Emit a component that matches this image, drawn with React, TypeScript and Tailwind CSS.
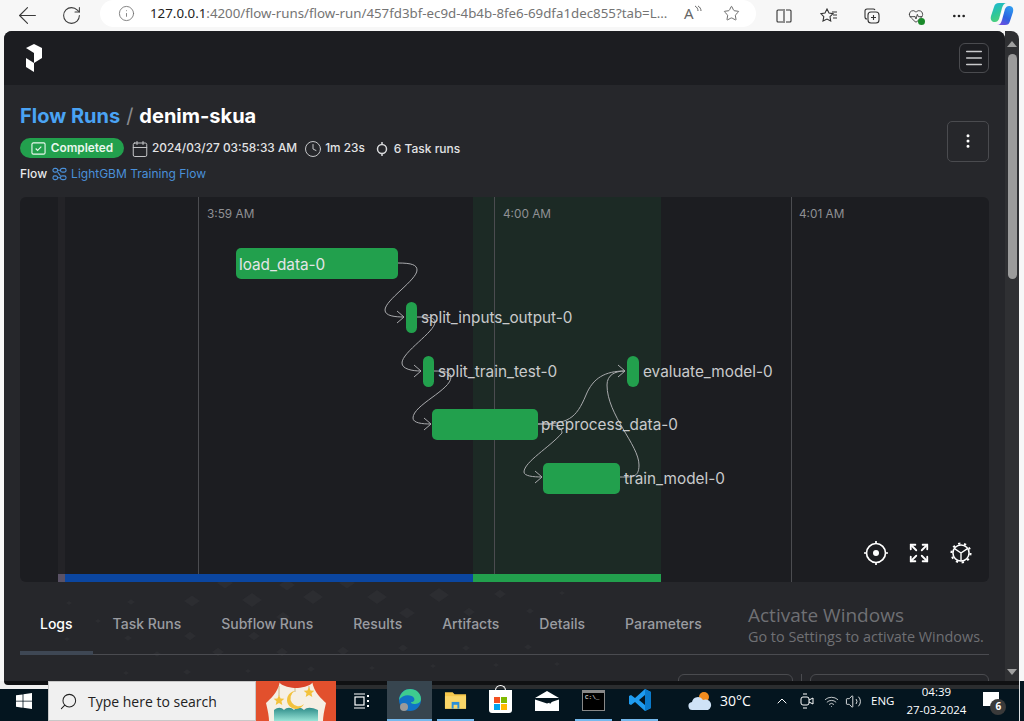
import {
  ArrowLeft,
  Calendar,
  ChevronUp,
  Clock,
  Ellipsis,
  EllipsisVertical,
  Expand,
  HeartPulse,
  Info,
  Menu,
  RotateCw,
  Search,
  Star,
  Volume2,
  Wifi,
} from "lucide-react";

const tabs = ["Logs", "Task Runs", "Subflow Runs", "Results", "Artifacts", "Details", "Parameters"];

const nodes = [
  { label: "load_data-0", box: "left-[216px] top-[51px] w-[162px] rounded-[5px]", text: "left-[219px] top-[56px] text-[#e4e5e7]" },
  { label: "split_inputs_output-0", box: "left-[386px] top-[105px] w-[11px] rounded-[6px]", text: "left-[401px] top-[109px] text-[#c9cacc]" },
  { label: "split_train_test-0", box: "left-[403px] top-[159px] w-[11px] rounded-[6px]", text: "left-[418px] top-[163px] text-[#c9cacc]" },
  { label: "evaluate_model-0", box: "left-[607px] top-[159px] w-[12px] rounded-[6px]", text: "left-[623px] top-[163px] text-[#c9cacc]" },
  { label: "preprocess_data-0", box: "left-[412px] top-[212px] w-[106px] rounded-[5px]", text: "left-[521px] top-[216px] text-[#c9cacc]" },
  { label: "train_model-0", box: "left-[523px] top-[266px] w-[77px] rounded-[5px]", text: "left-[604px] top-[270px] text-[#c9cacc]" },
];

const edges = [
  "M378 66 C392 66 397 68 397 73 C397 83 365 103 365 113 C365 119 375 120 384 120",
  "M397 120 C408 120 415 120 415 125 C415 135 382 155 382 166 C382 172 392 174 401 174",
  "M414 174 C425 174 431 175 431 180 C431 193 393 208 393 221 C393 226 402 227 411 227",
  "M518 227 C530 227 542 228 542 236 C530 250 504 265 504 275 C504 279 513 280 522 280",
  "M518 227 C548 227 556 222 566 198 C573 181 585 174 605 174",
  "M600 280 C612 280 619 281 619 268 C619 248 587 218 587 188 C587 178 595 174 605 174",
];

const arrows = ["M377 114 L384 120 L377 126", "M394 168 L401 174 L394 180", "M404 221 L411 227 L404 233", "M515 274 L522 280 L515 286", "M598 168 L605 174 L598 180"];

// background speckle behind the tabs, page coordinates: x, y, half width
const diamonds = [
  [192, 601, 8], [252, 600, 10], [283, 617, 7], [313, 597, 10], [377, 597, 10], [225, 583, 8], [287, 585, 8], [347, 583, 8],
  [131, 602, 4], [69, 603, 3], [98, 621, 3], [190, 636, 6], [254, 636, 6], [128, 638, 4], [67, 639, 3], [218, 652, 6],
  [282, 652, 6], [343, 651, 6], [157, 654, 4], [311, 669, 4], [248, 671, 3], [187, 672, 4], [126, 673, 3], [439, 595, 10],
  [500, 594, 6], [530, 611, 4], [469, 612, 6], [407, 613, 8], [562, 593, 3], [466, 648, 4], [528, 647, 4], [403, 648, 5],
  [433, 666, 3], [496, 665, 3], [557, 664, 3], [372, 668, 3],
];

function Toolbar() {
  return (
    <div className="flex h-[31px] shrink-0 items-center bg-[#f7f7f7] text-[#3b3b3b]">
      <ArrowLeft className="ml-[14px] h-[27px] w-[27px]" strokeWidth={1} />
      <RotateCw className="ml-[20px] h-[21px] w-[21px]" strokeWidth={1.2} />
      <div className="ml-[18px] flex h-[27px] w-[656px] -translate-y-[2px] items-center rounded-[14px] bg-white pl-[18px]">
        <Info className="h-[17px] w-[17px] text-[#707070]" strokeWidth={1.2} />
        <span className="ml-[15px] w-[522px] whitespace-nowrap text-[13.3px] text-[#747474]">
          <span className="text-[#222]">127.0.0.1</span>:4200/flow-runs/flow-run/457fd3bf-ec9d-4b4b-8fe6-69dfa1dec855?tab=L...
        </span>
        <span className="ml-[12px] text-[15px] text-[#666]">A</span>
        <svg viewBox="0 0 8 10" className="h-[10px] w-[8px] -translate-y-[4px] text-[#666]" fill="none" stroke="currentColor" strokeWidth="1">
          <path d="M1 1c2 1 3 3 3 5M4 1c2 1 3 3 3 5" />
        </svg>
        <Star className="ml-[21px] h-[17px] w-[17px] text-[#555]" strokeWidth={1.2} />
      </div>
      <svg viewBox="0 0 16 14" className="ml-[20px] h-[14px] w-[16px] text-[#333]" fill="none" stroke="currentColor" strokeWidth="1.1">
        <path d="M7 1H2a1 1 0 0 0-1 1v10a1 1 0 0 0 1 1h5M10 1h4a1 1 0 0 1 1 1v10a1 1 0 0 1-1 1h-4M8 0v14" />
      </svg>
      <svg viewBox="0 0 18 16" className="ml-[28px] h-[16px] w-[18px] text-[#333]" fill="none" stroke="currentColor" strokeWidth="1.1">
        <path d="M7 1l2 4 4 .6-3 3 .7 4.4L7 11l-4 2 .8-4.4-3-3L5 5zM13 7h4M13 10h4M12 4h5" />
      </svg>
      <svg viewBox="0 0 16 16" className="ml-[26px] h-[16px] w-[16px] text-[#333]" fill="none" stroke="currentColor" strokeWidth="1.1">
        <path d="M3 11a2 2 0 0 1-2-2V3a2 2 0 0 1 2-2h6a2 2 0 0 1 2 1" />
        <rect x="4" y="4" width="11" height="11" rx="3" />
        <path d="M9.500 7v5M7 9.500h5" />
      </svg>
      <div className="relative ml-[28px] h-[16px] w-[16px]">
        <HeartPulse className="h-[16px] w-[16px] text-[#333]" strokeWidth={1.3} />
        <div className="absolute -right-[1px] -bottom-[1px] h-[7px] w-[7px] rounded-full bg-[#1a8a2a]" />
      </div>
      <Ellipsis className="ml-[27px] h-[16px] w-[16px] text-[#222]" strokeWidth={2} />
      <svg viewBox="0 0 24 24" className="ml-[23px] h-[24px] w-[24px] -translate-y-[2px]">
        <defs>
          <linearGradient id="cop" x1="0" y1="0" x2="0.4" y2="1">
            <stop offset="0" stopColor="#1bb6d8" />
            <stop offset="0.6" stopColor="#2fc79a" />
            <stop offset="1" stopColor="#4fd07a" />
          </linearGradient>
          <linearGradient id="cop2" x1="0.8" y1="0" x2="0.3" y2="1">
            <stop offset="0" stopColor="#2f9cf0" />
            <stop offset="0.6" stopColor="#2b62e0" />
            <stop offset="1" stopColor="#6d4fe0" />
          </linearGradient>
        </defs>
        <path d="M9 1h8c-3 0-4 2-5 5L9 17c-1 2-2 3-4 3-3 0-5-2-4-6l3-9c1-3 2-4 5-4z" fill="url(#cop)" />
        <path d="M15 23H7c3 0 4-2 5-5l3-11c1-2 2-3 4-3 3 0 5 2 4 6l-3 9c-1 3-2 4-5 4z" fill="url(#cop2)" />
        <path d="M13.500 8L10.500 17" stroke="#fff" strokeWidth="1.500" />
      </svg>
    </div>
  );
}

function Graph() {
  return (
    <div className="relative h-[385px] overflow-hidden rounded-[6px] bg-[#1c1d21] font-['Inter',sans-serif]">
      <div className="absolute top-0 bottom-0 left-[38px] w-[7px] bg-[#232327]" />
      <div className="absolute top-0 bottom-0 left-[453px] w-[188px] bg-[#1c2a25]" />
      <div className="absolute top-0 bottom-0 left-[178px] w-px bg-[#4b4c50]" />
      <div className="absolute top-0 bottom-0 left-[474px] w-px bg-[#4b4c50]" />
      <div className="absolute top-0 bottom-0 left-[771px] w-px bg-[#4b4c50]" />
      <span className="absolute top-[9px] left-[187px] text-[11.800px] text-[#8f9094]">3:59 AM</span>
      <span className="absolute top-[9px] left-[483px] text-[11.800px] text-[#8f9094]">4:00 AM</span>
      <span className="absolute top-[9px] left-[779px] text-[11.800px] text-[#8f9094]">4:01 AM</span>

      {nodes.map((node) => (
        <div key={node.label} className={`absolute h-[31px] bg-[#22a04d] ${node.box}`} />
      ))}
      <svg viewBox="0 0 969 385" className="absolute inset-0 h-[385px] w-[969px]" fill="none" stroke="#a9aaad" strokeWidth="1">
        {edges.map((d) => (
          <path key={d} d={d} />
        ))}
        {arrows.map((d) => (
          <path key={d} d={d} />
        ))}
      </svg>
      {nodes.map((node) => (
        <span key={node.label} className={`absolute text-[15.300px] leading-[24px] whitespace-nowrap ${node.text}`}>
          {node.label}
        </span>
      ))}

      <div className="absolute top-[344px] left-[844px] flex items-center gap-[20px] text-white">
        <svg viewBox="0 0 24 24" className="h-[24px] w-[24px]" fill="none" stroke="currentColor" strokeWidth="1.700">
          <circle cx="12" cy="12" r="9.500" />
          <circle cx="12" cy="12" r="3" fill="currentColor" stroke="none" />
          <path d="M12 0v3M12 21v3M0 12h3M21 12h3" />
        </svg>
        <Expand className="h-[22px] w-[22px]" strokeWidth={2} />
        <svg viewBox="0 0 24 24" className="h-[22px] w-[22px]" fill="none" stroke="currentColor">
          <circle cx="12" cy="12" r="8.800" strokeWidth="1.700" />
          <circle cx="12" cy="12" r="10.400" strokeWidth="2.200" strokeDasharray="2.500 4" />
          <path d="M12 12v8.500M12 12L5 7.200M12 12l7-4.800" strokeWidth="1.500" />
        </svg>
      </div>

      <div className="absolute right-0 bottom-0 left-[38px] flex h-[8px]">
        <div className="w-[7px] bg-[#5a5266]" />
        <div className="w-[408px] bg-[#0b46a0]" />
        <div className="w-[188px] bg-[#22a04d]" />
      </div>
    </div>
  );
}

function Prefect() {
  return (
    <div className="relative flex h-[650px] min-w-0 flex-1 flex-col overflow-hidden rounded-t-[8px] bg-[#26272b] font-['Inter',sans-serif]">
      <svg viewBox="4 31 1001 650" className="absolute inset-0 h-[650px] w-[1001px]" fill="#2c2d31">
        {diamonds.map(([x, y, r]) => (
          <path key={`${x}-${y}`} d={`M${x - r} ${y}L${x} ${y - r * 0.7}L${x + r} ${y}L${x} ${y + r * 0.7}Z`} />
        ))}
      </svg>

      <div className="relative flex h-[54px] shrink-0 items-center justify-between bg-[#1c1d21] pr-[16px] pl-[22px]">
        <svg viewBox="0 0 16 28" className="h-[28px] w-[16px]" fill="#fff">
          <path d="M0 4L8 0l8 4v10l-8 5V9z" />
          <path d="M0 14l8 5v9l-8-5z" />
        </svg>
        <button className="flex h-[30px] w-[30px] items-center justify-center rounded-[6px] border border-[#4a4b4f] text-[#c9cacc]">
          <Menu className="h-[22px] w-[22px]" strokeWidth={1.600} />
        </button>
      </div>

      <div className="relative flex flex-1 flex-col px-[16px]">
        <div className="flex items-center justify-between pt-[19px]">
          <div>
            <h1 className="text-[20px] leading-[24px] font-bold text-white">
              <span className="text-[#4aa3f4]">Flow Runs</span>
              <span className="mx-[6px] font-normal text-[#8a8b8f]">/</span>
              denim-skua
            </h1>
            <div className="mt-[11px] flex h-[20px] items-center text-[11.850px] font-medium text-[#e2e3e5]">
              <span className="mr-[7px] flex h-[20px] w-[104px] -translate-y-[1px] items-center justify-center gap-[5px] rounded-full bg-[#22a04d] text-[11.800px] font-semibold text-[#e9f7ee]">
                <svg viewBox="0 0 16 16" className="h-[15px] w-[15px]" fill="none" stroke="currentColor" strokeWidth="1.200">
                  <rect x="1" y="2" width="14" height="12" rx="1.500" />
                  <path d="M5 8l2 2 4-4" />
                </svg>
                <span className="translate-y-[1px]">Completed</span>
              </span>
              <Calendar className="mr-[3px] h-[18px] w-[18px] text-[#c9cacc]" strokeWidth={1.300} />
              2024/03/27 03:58:33 AM
              <Clock className="mr-[3px] ml-[7px] h-[18px] w-[18px] text-[#c9cacc]" strokeWidth={1.300} />
              1m 23s
              <svg viewBox="0 0 14 14" className="mr-[5px] ml-[10px] h-[14px] w-[14px] text-[#d9dadc]" fill="none" stroke="currentColor" strokeWidth="1.500">
                <circle cx="7" cy="7" r="4.500" />
                <path d="M7 0v2.500M7 11.500V14" />
              </svg>
              <span className="text-[12px]">6 Task runs</span>
            </div>
            <div className="mt-[6px] flex h-[17px] items-center text-[12px]">
              <span className="font-medium text-[#e9eaec]">Flow</span>
              <svg viewBox="0 0 16 14" className="mr-[4px] ml-[5px] h-[14px] w-[15px] text-[#4a90d9]" fill="none" stroke="currentColor" strokeWidth="1.200">
                <rect x="1" y="1" width="5" height="4" rx="2" />
                <rect x="9" y="1" width="6" height="4" rx="2" />
                <rect x="1" y="9" width="5" height="4" rx="2" />
                <rect x="9" y="9" width="6" height="4" rx="2" />
                <path d="M6 3h3M6 11h3M6 5l3 4" />
              </svg>
              <span className="text-[#4a90d9]">LightGBM Training Flow</span>
            </div>
          </div>
          <button className="mb-[4px] flex h-[41px] w-[42px] items-center justify-center rounded-[5px] border border-[#4a4b4f] text-white">
            <EllipsisVertical className="h-[18px] w-[18px]" strokeWidth={2} />
          </button>
        </div>

        <div className="mt-[15px]">
          <Graph />
        </div>

        <div className="mt-[22px] flex h-[51px] border-b border-[#4a4b50]">
          {tabs.map((tab, i) => (
            <div
              key={tab}
              className={
                i === 0
                  ? "h-[51px] border-b-4 border-[#3e4754] px-[20px] pt-[9px] text-[14px] leading-[22px] font-medium text-white"
                  : "h-[51px] px-[20px] pt-[9px] text-[14px] leading-[22px] font-medium text-[#9a9ca1]"
              }
            >
              {tab}
            </div>
          ))}
        </div>

        <div className="mt-[19px] flex justify-end">
          <div className="h-[30px] w-[115px] rounded-[6px] border border-[#4a4b4f]" />
          <div className="mx-[8px] h-[30px] w-px bg-[#4a4b4f]" />
          <div className="h-[30px] w-[179px] rounded-[6px] border border-[#4a4b4f]" />
        </div>
      </div>

      <div className="absolute top-[572px] left-[744px] font-['Open_Sans',sans-serif] text-[#6f7074]">
        <p className="text-[19px] leading-[24px]">Activate Windows</p>
        <p className="text-[14.400px] leading-[20px]">Go to Settings to activate Windows.</p>
      </div>
    </div>
  );
}

function ScrollBar() {
  return (
    <div className="flex h-[650px] w-[14px] shrink-0 flex-col items-center rounded-tr-[8px] bg-[#2f3033] pt-[10px]">
      <div className="h-0 w-0 border-x-[5px] border-b-[6px] border-x-transparent border-b-[#a0a0a0]" />
      <div className="mt-[7px] h-[225px] w-[9px] rounded-full bg-[#9b9b9b]" />
      <div className="mt-auto mb-[6px] h-0 w-0 border-x-[5px] border-t-[6px] border-x-transparent border-t-[#a0a0a0]" />
    </div>
  );
}

function TaskItem({ width, active, line, children }: { width: string; active?: boolean; line?: boolean; children: React.ReactNode }) {
  return (
    <div className={`relative flex h-[40px] items-center justify-center ${width} ${active ? "z-10 bg-[#37454f]" : ""} ${line ? "border-b-2 border-[#76b9ed]" : ""}`}>
      {children}
    </div>
  );
}

function Taskbar() {
  return (
    <div className="relative flex h-[40px] shrink-0 items-center bg-[#04151f] font-['Open_Sans',sans-serif] text-white">
      {/* window shadow along the top of the taskbar */}
      <div className="absolute top-0 right-[5px] left-0 flex h-[8px] flex-col">
        <div className="h-[4px] bg-[#101113]" />
        <div className="h-[4px] bg-[#2b2d2f]" />
      </div>
      <div className="absolute top-0 left-0 h-[8px] w-[48px] bg-[#f0f0f0]">
        <div className="ml-[4px] h-[4px] rounded-bl-[4px] bg-[#101113]" />
      </div>
      <div className="relative flex h-[40px] w-[48px] items-center justify-center">
        <svg viewBox="0 0 16 16" className="h-[16px] w-[16px]" fill="#fff">
          <path d="M0 2.300l6.600-.9v6.300H0zM7.400 1.300L16 0v7.700H7.400zM0 8.400h6.600v6.300L0 13.800zM7.400 8.400H16V16l-8.600-1.200z" />
        </svg>
      </div>
      <div className="relative flex h-[40px] w-[208px] items-center border border-[#c8c8c8] bg-[#f0f0f0] pl-[10px] text-[14px] text-[#222]">
        <Search className="h-[19px] w-[19px] -scale-x-100" strokeWidth={1.300} />
        <span className="ml-[10px]">Type here to search</span>
      </div>
      <svg viewBox="0 0 80 40" className="relative h-[40px] w-[80px]">
        <defs>
          <linearGradient id="wave" x1="0" y1="0" x2="0" y2="1">
            <stop offset="0" stopColor="#2f8d8a" />
            <stop offset="1" stopColor="#98e4d6" />
          </linearGradient>
        </defs>
        <rect width="80" height="40" fill="#f5efe4" />
        <path d="M18 29c4-3 7-3 10 0 3-3 7-3 10 0 3-3 7-3 10 0 3-3 7-3 14 0v11H18z" fill="url(#wave)" />
        <path d="M23 5v10M53 5v3M39 7v4" stroke="#cdb887" strokeWidth="1" />
        <path d="M0 0H24C22 12 14 18 10 22 12 30 13 36 13 40H0z" fill="#e2502d" />
        <path d="M80 0H56C58 12 66 18 70 22 68 30 67 36 67 40H80z" fill="#e2502d" />
        <path d="M22 0H58C54 6 44 7 40 7S26 6 22 0z" fill="#d9452a" />
        <path d="M39 10a9 9 0 1 0 9 13 8 8 0 1 1-9-13z" fill="#f3c23c" />
        <path d="M23 14l1.600 3.400 3.700.4-2.800 2.500.8 3.700-3.300-1.900-3.300 1.900.8-3.700-2.800-2.500 3.700-.4zM53 6l1.600 3.400 3.700.4-2.800 2.500.8 3.700-3.300-1.900-3.300 1.900.8-3.700-2.800-2.500 3.700-.4z" fill="#f3c23c" />
      </svg>
      <TaskItem width="w-[51px]">
        <svg viewBox="0 0 16 16" className="h-[16px] w-[16px]" fill="none" stroke="#fff" strokeWidth="1.200">
          <path d="M0 1h11M0 15h11" />
          <rect x="1" y="4" width="9" height="8" />
          <path d="M14 2v2M14 7v2M14 12v2" strokeWidth="2" />
        </svg>
      </TaskItem>
      <TaskItem width="w-[45px]" active line>
        <svg viewBox="0 0 24 24" className="h-[24px] w-[24px]">
          <circle cx="12" cy="12" r="11" fill="#1172c6" />
          <path d="M1 12C2 4 8 1 12 1c6 0 11 4 11 10 0 4-4 5-7 5-2 0-3-1-3-2 3 0 4-2 3-4-2-4-12-4-15 2z" fill="#3ecb8f" />
          <circle cx="6" cy="19" r="4" fill="#9a9a9a" />
        </svg>
      </TaskItem>
      <div className="w-[5px]" />
      <TaskItem width="w-[37px]" line>
        <svg viewBox="0 0 24 20" className="h-[20px] w-[23px]">
          <path d="M1 2h8l2 2h12v15H1z" fill="#f5c84c" />
          <path d="M1 6h22v13H1z" fill="#fad769" />
          <rect x="8" y="12" width="8" height="7" fill="#2a8fd8" />
          <rect x="10" y="15" width="4" height="4" fill="#fad769" />
        </svg>
      </TaskItem>
      <TaskItem width="w-[53px]">
        <div className="relative h-[23px] w-[23px] rounded-b-[3px] bg-white">
          <div className="absolute -top-[5px] left-[6px] h-[7px] w-[11px] rounded-t-full border border-b-0 border-white" />
          <div className="absolute top-[7px] left-[5px] grid grid-cols-2 gap-[1px]">
            <div className="h-[6px] w-[6px] bg-[#f25022]" />
            <div className="h-[6px] w-[6px] bg-[#7fba00]" />
            <div className="h-[6px] w-[6px] bg-[#00a4ef]" />
            <div className="h-[6px] w-[6px] bg-[#ffb900]" />
          </div>
        </div>
      </TaskItem>
      <TaskItem width="w-[40px]">
        <svg viewBox="0 0 24 20" className="h-[20px] w-[24px]" fill="#fff">
          <path d="M12 0l12 7H0zM0 8.500l12 4 12-4V20H0z" />
          <path d="M13 9l7-2-5 6z" fill="#04151f" />
        </svg>
      </TaskItem>
      <div className="w-[8px]" />
      <TaskItem width="w-[37px]" line>
        <div className="h-[21px] w-[23px] border border-[#888] border-t-[3px] bg-black pt-px pl-[2px] font-['Liberation_Mono',monospace] text-[6px] leading-[7px]">
          C:\_
        </div>
      </TaskItem>
      <div className="w-[9px]" />
      <TaskItem width="w-[37px]" line>
        <svg viewBox="0 0 24 24" className="h-[24px] w-[24px]">
          <path d="M17 1l6 3v16l-6 3-10-9-4 3-2-1V8l2-1 4 3zM17 7l-6 5 6 5z" fill="#1f9cf0" />
          <path d="M17 1l6 3v16l-6 3z" fill="#0a7acb" />
        </svg>
      </TaskItem>
      <div className="w-[30px]" />
      <svg viewBox="0 0 24 20" className="relative h-[20px] w-[24px]">
        <circle cx="16" cy="6" r="5" fill="#f28c1e" />
        <path d="M5 19a4 4 0 0 1-1-8 6 6 0 0 1 11-2 5 5 0 0 1 5 10z" fill="#cfe2f6" />
      </svg>
      <span className="relative ml-[8px] w-[54px] -translate-y-[1px] text-[14px]">30°C</span>
      <ChevronUp className="relative h-[16px] w-[16px]" strokeWidth={1.500} />
      <svg viewBox="0 0 14 16" className="relative ml-[10px] h-[16px] w-[14px]" fill="none" stroke="#fff" strokeWidth="1">
        <rect x="1" y="4" width="8" height="8" rx="2" />
        <path d="M9 7l4-2v6l-4-2M3 1h4M3 15h4" />
      </svg>
      <Wifi className="relative ml-[10px] h-[15px] w-[15px]" strokeWidth={1.200} />
      <Volume2 className="relative ml-[6px] h-[17px] w-[17px]" strokeWidth={1.200} />
      <span className="relative ml-[9px] text-[11.500px]">ENG</span>
      <div className="relative z-10 ml-[11px] w-[62px] text-center text-[11.500px] leading-[18px]">
        <p>04:39</p>
        <p>27-03-2024</p>
      </div>
      <div className="relative mt-[5px] ml-[16px] h-[24px] w-[23px]">
        <div className="h-[14px] w-[16px] bg-white" />
        <div className="absolute top-[7px] left-[7px] flex h-[16px] w-[16px] items-center justify-center rounded-full bg-[#3a3a3a] text-[10px] font-bold">6</div>
      </div>
      <div className="relative ml-auto mr-[4px] h-[40px] w-px bg-[#dfe3e6]" />
    </div>
  );
}

export default function App() {
  return (
    <div className="flex h-[721px] w-[1024px] flex-col overflow-hidden bg-[#f7f7f7]">
      <Toolbar />
      <div className="flex h-[650px] shrink-0 pr-[5px] pl-[4px]">
        <Prefect />
        <ScrollBar />
      </div>
      <Taskbar />
    </div>
  );
}
